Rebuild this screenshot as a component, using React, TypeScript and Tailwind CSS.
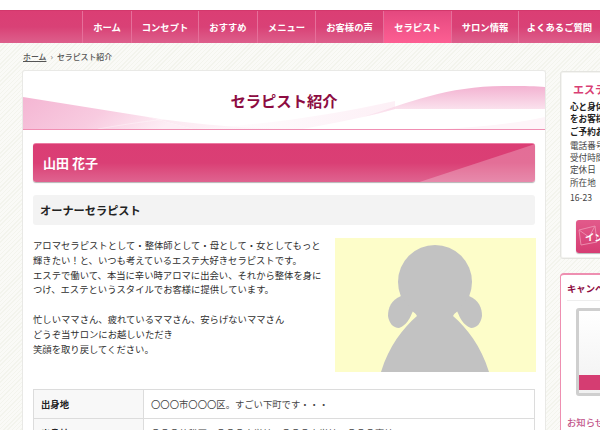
const FONT = "font-['Noto_Sans_CJK_JP','Noto_Sans',sans-serif]";

const navItems: [string, string, boolean][] = [
  ["ホーム", "w-[49px]", false],
  ["コンセプト", "w-[67px]", false],
  ["おすすめ", "w-[59px]", false],
  ["メニュー", "w-[58px]", false],
  ["お客様の声", "w-[68px]", false],
  ["セラピスト", "w-[68px]", true],
  ["サロン情報", "w-[67px]", false],
  ["よくあるご質問", "w-[82px]", false],
];

function Banner() {
  return (
    <svg className="absolute inset-0" width="522" height="58" viewBox="0 0 522 58">
      <defs>
        <linearGradient id="l" x1="0" y1="0" x2="1" y2="0.25">
          <stop offset="0" stopColor="#f4b6d3" />
          <stop offset="0.55" stopColor="#f8cbe0" />
          <stop offset="1" stopColor="#fdeef5" />
        </linearGradient>
        <linearGradient id="l2" x1="0" y1="0" x2="1" y2="0">
          <stop offset="0" stopColor="#fce6f0" />
          <stop offset="1" stopColor="#ffffff" />
        </linearGradient>
        <linearGradient id="r" x1="0" y1="0" x2="0" y2="1">
          <stop offset="0" stopColor="#f3b2d1" />
          <stop offset="1" stopColor="#fdf2f7" />
        </linearGradient>
        <linearGradient id="s" x1="0" y1="0" x2="1" y2="0">
          <stop offset="0" stopColor="#ffffff" />
          <stop offset="1" stopColor="#f9d3e5" />
        </linearGradient>
      </defs>
      <path d="M0 26 L125 46 L170 58 L0 58 Z" fill="url(#l)" />
      <path d="M125 46 C 160 52 220 58 280 58 L170 58 Z" fill="url(#l2)" />
      <path d="M75 58 C 120 50 150 47 190 43" stroke="#fff" strokeWidth="0.7" fill="none" opacity="0.5" />
      <path d="M340 46 C 385 32 425 15 480 15 C 500 15 512 15 522 16 L522 38 L372 38 C 360 41 350 44 340 46 Z" fill="url(#r)" />
      <path d="M170 58 C 240 54 310 44 372 30 L372 38 C 345 46 310 52 280 58 Z" fill="url(#s)" opacity="0.35" />
      <path d="M420 58 C 460 56 495 52 522 46 L522 58 Z" fill="#fef5f9" />
    </svg>
  );
}

function Person() {
  return (
    <svg width="201" height="134" viewBox="0 0 201 134" className="block bg-[#fdfdc9]">
      <circle cx="100" cy="44" r="37" fill="#c2c2c2" />
      <path d="M46 134 C 54 108 68 90 82 78 L77 70 L123 70 L118 78 C 132 90 146 108 154 134 Z" fill="#c2c2c2" />
      <path d="M66 58 C 56 62 53 70 53 78 C 54 85 58 90 64 90 C 72 87 75 80 78 73 Z" fill="#c2c2c2" />
      <path d="M134 58 C 144 62 147 70 147 78 C 146 85 142 90 136 90 C 128 87 125 80 122 73 Z" fill="#c2c2c2" />
    </svg>
  );
}

export default function App() {
  return (
    <div className={`${FONT} h-[430px] w-[600px] overflow-hidden bg-[#f7f7f2] bg-[repeating-linear-gradient(135deg,#f3f4ed_0px,#f3f4ed_1px,#fafaf7_1px,#fafaf7_3px)] text-[#333]`}>
      <div className="h-[10px] bg-white" />
      <nav className="flex h-[33px] border-t border-[#d2386c] bg-gradient-to-b from-[#db3e74] via-[#d94176] to-[#dd5f8c] pl-[82px]">
        {navItems.map(([label, w, active]) => (
          <div
            key={label}
            className={`${w} flex shrink-0 items-center justify-center border-l border-[#e66f9a] text-[9.33px] font-bold whitespace-nowrap text-white ${active ? "bg-gradient-to-b from-[#e4487f] to-[#fd5f93]" : ""}`}
          >
            {label}
          </div>
        ))}
      </nav>

      <div className="flex h-[28px] items-center pl-[23px] text-[7.9px] font-medium text-[#555]">
        <span className="underline">ホーム</span>
        <span className="mx-[4px] text-[#888]">›</span>
        <span>セラピスト紹介</span>
      </div>

      <div className="flex items-start pl-[23px]">
        <main className="h-[360px] w-[522px] shrink-0 rounded-t-[2px] bg-white shadow-[0_0_0_1px_#e9e9e6]">
          <div className="relative flex h-[59px] items-center justify-center border-b border-[#f08fb3]">
            <Banner />
            <h1 className="relative text-[15.3px] font-bold text-[#8d0c42]">セラピスト紹介</h1>
          </div>

          <div className="px-[10px]">
            <div className="relative mt-[13px] flex h-[39px] items-center overflow-hidden rounded-[3px] border-t border-[#ec7ba2] bg-gradient-to-b from-[#db3d74] via-[#da3f75] to-[#df6390] pl-[10px] shadow-[0_1px_1px_#b5b5b5]">
              <h2 className="text-[13px] font-bold text-white">山田 花子</h2>
              <div className="absolute inset-0 bg-white/25 [clip-path:polygon(100%_0,100%_100%,77%_100%)]" />
            </div>

            <div className="mt-[13px] flex h-[30px] items-center rounded-[3px] bg-[#f3f3f3] pl-[7px] text-[11.2px] font-bold text-[#222]">
              オーナーセラピスト
            </div>

            <div className="mt-[13px] flex justify-between">
              <p className="w-[292px] text-[9.33px] leading-[14.8px] whitespace-nowrap text-[#2e2e2e]">
                アロマセラピストとして・整体師として・母として・女としてもっと<br />
                輝きたい！と、いつも考えているエステ大好きセラピストです。<br />
                エステで働いて、本当に辛い時アロマに出会い、それから整体を身に<br />
                つけ、エステというスタイルでお客様に提供しています。<br />
                <br />
                忙しいママさん、疲れているママさん、安らげないママさん<br />
                どうぞ当サロンにお越しいただき<br />
                笑顔を取り戻してください。
              </p>
              <div className="-mr-px">
                <Person />
              </div>
            </div>

            <table className="mt-[17px] w-[502px] table-fixed border-collapse text-[9.33px]">
              <tbody>
                <tr className="h-[29px]">
                  <th className="w-[110px] border border-[#dcdcdc] bg-[#f8f8f8] pl-[7px] text-left font-bold text-[#222]">出身地</th>
                  <td className="border border-[#dcdcdc] pb-[1px] pl-[7px] text-[#444]">〇〇〇市〇〇〇区。すごい下町です・・・</td>
                </tr>
                <tr className="h-[29px]">
                  <th className="border border-[#dcdcdc] bg-[#f8f8f8] pl-[7px] text-left font-bold text-[#222]">出身校</th>
                  <td className="border border-[#dcdcdc] pl-[7px] text-[#444]">〇〇〇幼稚園、〇〇〇小学校、〇〇〇中学校、〇〇〇高校</td>
                </tr>
              </tbody>
            </table>
          </div>
        </main>

        <aside className="ml-[15px] w-[200px] shrink-0">
          <div className="h-[188px] rounded-[3px] border border-[#e4e4e0] bg-white pt-[10px] pl-[9px] shadow-[inset_0_0_0_1px_#f4f4f1]">
            <h3 className="pl-[3px] text-[11px] leading-[14px] font-bold text-[#d93f75]">エステサロン</h3>
            <p className="mt-[4px] text-[8.6px] leading-[12.3px] font-bold whitespace-nowrap text-[#222]">
              心と身体を癒すサロンです<br />をお客様に<br />ご予約お待ちしています
            </p>
            <p className="mt-[2px] text-[8.6px] leading-[12.3px] whitespace-nowrap text-[#444]">
              電話番号<br />受付時間<br />定休日<br />所在地
            </p>
            <p className="mt-[3px] text-[8.6px] leading-[12.3px] text-[#444]">16-23</p>
            <div className="relative mt-[17px] ml-[6px] flex h-[33px] w-[120px] items-center overflow-hidden rounded-[3px] bg-gradient-to-b from-[#e25a8b] to-[#d63c73] pl-[9px] text-[9.33px] font-bold text-white shadow-[0_1px_1px_#b9b9b9]">
              <svg className="absolute top-[5px] left-[2px]" width="20" height="22" viewBox="0 0 20 22" fill="none" stroke="#ec8bad" strokeWidth="1">
                <path d="M1 5 L17 1 L19 17 L3 20 Z M1 5 L11 12 L17 1" />
              </svg>
              <span className="relative">インターネット予約</span>
            </div>
          </div>

          <div className="mt-[14px] h-[160px] rounded-t-[4px] border-t-2 border-l border-[#ee8fb1] bg-white pl-[6px]">
            <h3 className="flex h-[26px] items-center border-b border-[#eee] text-[9.33px] font-bold whitespace-nowrap text-[#8d0c42]">キャンペーン情報</h3>
            <div className="mt-[7px] ml-[9px] flex h-[88px] w-[130px] flex-col justify-end rounded-[3px] border-[3px] border-[#cfcfcf] bg-gradient-to-b from-white to-[#f1f1f1] pb-[3px]">
              <div className="h-[15px] bg-[#d53d72]" />
            </div>
            <h3 className="mt-[19px] text-[9.33px] leading-[14px] font-medium whitespace-nowrap text-[#c2568a]">お知らせ</h3>
          </div>
        </aside>
      </div>
    </div>
  );
}
